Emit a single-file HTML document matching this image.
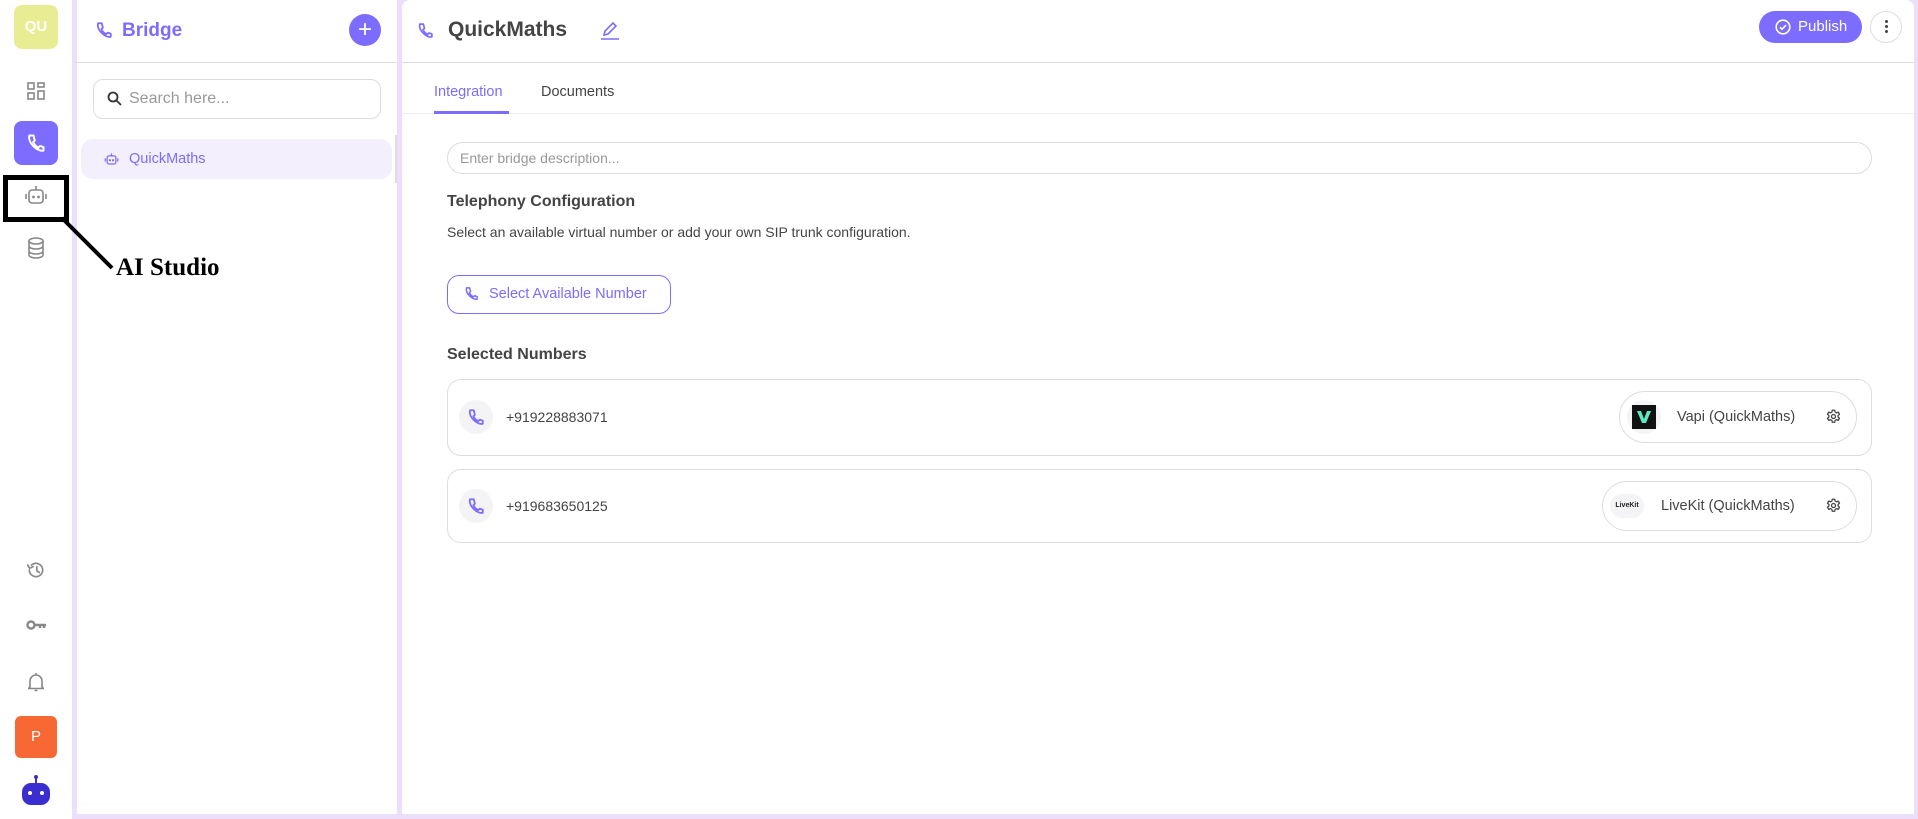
<!DOCTYPE html>
<html><head><meta charset="utf-8"><style>
*{box-sizing:border-box;margin:0;padding:0}
body{width:1918px;height:819px;background:#ecdffb;font-family:"Liberation Sans",sans-serif;position:relative;overflow:hidden;color:#444}
.abs{position:absolute}
.rail{left:0;top:0;width:72px;height:819px;background:#fff}
.p2{left:77px;top:0;width:320px;height:814px;background:#fff}
.main{left:402px;top:0;width:1512px;height:814px;background:#fff;border-radius:8px 8px 0 0}
svg{display:block}
</style></head><body>
<div class="abs rail"></div>
<div class="abs p2"></div>
<div class="abs main"></div>

<!-- rail -->
<div class="abs" style="left:14px;top:5px;width:44px;height:44px;border-radius:8px;background:#e8ec93;color:#fff;font-weight:bold;font-size:15px;text-align:center;line-height:44px">QU</div>
<svg class="abs" style="left:27px;top:82px" width="18" height="18" viewBox="0 0 18 18" fill="none" stroke="#888" stroke-width="1.6"><rect x="1" y="1" width="6" height="6"/><rect x="11" y="1" width="6" height="4"/><rect x="1" y="11" width="6" height="6"/><rect x="11" y="9" width="6" height="8"/></svg>
<div class="abs" style="left:14px;top:121px;width:44px;height:44px;border-radius:8px;background:#7c6cff"></div>
<svg class="abs" style="left:26px;top:133px" width="20" height="20" viewBox="0 0 24 24" fill="none" stroke="#fff" stroke-width="2.4" stroke-linecap="round" stroke-linejoin="round"><path d="M4 3c-1 4 1 9 5 13s9 6 12 5l0-4-4-1.5-2 2c-3-1.5-5-3.5-6.5-6.5l2-2L9 3z"/></svg>
<div class="abs" style="left:3px;top:175px;width:66px;height:47px;border:5px solid #000"></div>
<svg class="abs" style="left:24px;top:184px" width="24" height="22" viewBox="0 0 24 22" fill="none" stroke="#888" stroke-width="1.6"><rect x="5" y="6" width="14" height="13" rx="3"/><path d="M12 6V2M2 10v5M22 10v5"/><circle cx="9.5" cy="13" r=".6" fill="#888"/><circle cx="14.5" cy="13" r=".6" fill="#888"/></svg>
<svg class="abs" style="left:58px;top:214px" width="60" height="60"><path d="M4 4 L54 54" stroke="#000" stroke-width="4"/></svg>
<div class="abs" style="left:116px;top:254px;font-family:'Liberation Serif',serif;font-weight:bold;font-size:25px;color:#000">AI Studio</div>
<svg class="abs" style="left:27px;top:237px" width="18" height="22" viewBox="0 0 18 22" fill="none" stroke="#888" stroke-width="1.6"><ellipse cx="9" cy="4" rx="7" ry="3"/><path d="M2 4v14c0 1.7 3 3 7 3s7-1.3 7-3V4M2 9c0 1.7 3 3 7 3s7-1.3 7-3M2 14c0 1.7 3 3 7 3s7-1.3 7-3"/></svg>
<svg class="abs" style="left:26px;top:560px" width="20" height="20" viewBox="0 0 24 24" fill="none" stroke="#888" stroke-width="2" stroke-linecap="round"><path d="M4 12a8 8 0 1 0 2.5-5.8M2 6l2.5 4 4-2"/><path d="M13 8v5l3 2"/></svg>
<svg class="abs" style="left:26px;top:619px" width="21" height="12" viewBox="0 0 21 12" fill="none" stroke="#888" stroke-width="2.4"><circle cx="5" cy="6" r="3.5"/><path d="M9 6h11M14 6v3M18 6v3"/></svg>
<svg class="abs" style="left:28px;top:672px" width="16" height="20" viewBox="0 0 16 20" fill="none" stroke="#888" stroke-width="1.6"><path d="M2 15V9a6 6 0 0 1 12 0v6l1.5 1.5h-15z"/><path d="M8 1v2M6.5 18.5h3"/></svg>
<div class="abs" style="left:15px;top:716px;width:42px;height:42px;border-radius:6px;background:#f76835;color:#fff;font-size:15px;text-align:center;line-height:42px">P</div>
<svg class="abs" style="left:20px;top:774px" width="32" height="32" viewBox="0 0 32 32"><circle cx="16" cy="3" r="2" fill="#3b2ed0"/><rect x="15" y="3" width="2" height="7" fill="#3b2ed0"/><rect x="2" y="9" width="28" height="22" rx="9" fill="#3b2ed0"/><circle cx="10" cy="19" r="2" fill="#fff"/><circle cx="22" cy="19" r="2" fill="#fff"/></svg>

<!-- panel 2 -->
<svg class="abs" style="left:95px;top:21px" width="18" height="18" viewBox="0 0 24 24" fill="none" stroke="#7c6cff" stroke-width="2.4" stroke-linecap="round" stroke-linejoin="round"><path d="M4 3c-1 4 1 9 5 13s9 6 12 5l0-4-4-1.5-2 2c-3-1.5-5-3.5-6.5-6.5l2-2L9 3z"/></svg>
<div class="abs" style="left:122px;top:20px;font-size:19px;font-weight:bold;color:#7c6cff">Bridge</div>
<div class="abs" style="left:349px;top:14px;width:32px;height:32px;border-radius:50%;background:#7c6cff;color:#fff;text-align:center;line-height:31px;font-size:24px">+</div>
<div class="abs" style="left:77px;top:62px;width:320px;height:1px;background:#ddd"></div>
<div class="abs" style="left:93px;top:79px;width:288px;height:40px;border:1px solid #ddd;border-radius:10px"></div>
<svg class="abs" style="left:107px;top:91px" width="15" height="15" viewBox="0 0 15 15" fill="none" stroke="#333" stroke-width="1.8"><circle cx="6" cy="6" r="4.5"/><path d="M9.5 9.5L14 14"/></svg>
<div class="abs" style="left:129px;top:90px;font-size:16px;color:#999">Search here...</div>
<div class="abs" style="left:81px;top:139px;width:311px;height:40px;border-radius:12px;background:#f3effd"></div>
<svg class="abs" style="left:104px;top:152px" width="15" height="14" viewBox="0 0 24 22" fill="none" stroke="#7c6cff" stroke-width="2"><rect x="5" y="6" width="14" height="13" rx="3"/><path d="M12 6V2M2 10v5M22 10v5"/><circle cx="9.5" cy="13" r=".8" fill="#7c6cff"/><circle cx="14.5" cy="13" r=".8" fill="#7c6cff"/></svg>
<div class="abs" style="left:129px;top:151px;font-size:14.5px;color:#7c6cff">QuickMaths</div>
<div class="abs" style="left:395px;top:135px;width:2px;height:48px;background:#ddd"></div>

<!-- main header -->
<svg class="abs" style="left:417px;top:22px" width="17" height="17" viewBox="0 0 24 24" fill="none" stroke="#7c6cff" stroke-width="2.4" stroke-linecap="round" stroke-linejoin="round"><path d="M4 3c-1 4 1 9 5 13s9 6 12 5l0-4-4-1.5-2 2c-3-1.5-5-3.5-6.5-6.5l2-2L9 3z"/></svg>
<div class="abs" style="left:448px;top:18px;font-size:21px;font-weight:bold;color:#444">QuickMaths</div>
<svg class="abs" style="left:600px;top:20px" width="20" height="20" viewBox="0 0 20 20" fill="none" stroke="#7c6cff" stroke-width="1.6"><path d="M4 15l1-4 8-8 3 3-8 8z"/><path d="M1 19h18"/></svg>
<div class="abs" style="left:1759px;top:11px;width:103px;height:32px;border-radius:16px;background:#7c6cff;color:#fff;font-size:15px;line-height:32px;padding-left:39px">Publish</div>
<svg class="abs" style="left:1775px;top:19px" width="16" height="16" viewBox="0 0 16 16" fill="none" stroke="#fff" stroke-width="1.6"><circle cx="8" cy="8" r="6.8"/><path d="M5 8.2l2 2 4-4"/></svg>
<div class="abs" style="left:1870px;top:11px;width:32px;height:32px;border-radius:50%;border:1px solid #ddd"></div>
<div class="abs" style="left:1885px;top:20px;width:3px;height:3px;background:#444;border-radius:50%;box-shadow:0 5px 0 #444,0 10px 0 #444"></div>
<div class="abs" style="left:402px;top:62px;width:1512px;height:1px;background:#ddd"></div>
<div class="abs" style="left:434px;top:84px;font-size:14.5px;color:#7c6cff">Integration</div>
<div class="abs" style="left:541px;top:84px;font-size:14.5px;color:#444">Documents</div>
<div class="abs" style="left:402px;top:113px;width:1512px;height:1px;background:#eee"></div>
<div class="abs" style="left:434px;top:111px;width:75px;height:3px;background:#7c6cff"></div>

<div class="abs" style="left:447px;top:142px;width:1425px;height:32px;border:1px solid #ddd;border-radius:16px;font-size:14px;color:#999;padding-left:12px;line-height:30px">Enter bridge description...</div>
<div class="abs" style="left:447px;top:193px;font-size:16px;font-weight:bold;color:#444">Telephony Configuration</div>
<div class="abs" style="left:447px;top:224px;font-size:14px;color:#444">Select an available virtual number or add your own SIP trunk configuration.</div>
<div class="abs" style="left:447px;top:275px;width:224px;height:39px;border:1px solid #7c6cff;border-radius:12px;color:#7c6cff;font-size:14.5px;line-height:37px;padding-left:41px">Select Available Number</div>
<svg class="abs" style="left:464px;top:286px" width="15" height="15" viewBox="0 0 24 24" fill="none" stroke="#7c6cff" stroke-width="2.4" stroke-linecap="round" stroke-linejoin="round"><path d="M4 3c-1 4 1 9 5 13s9 6 12 5l0-4-4-1.5-2 2c-3-1.5-5-3.5-6.5-6.5l2-2L9 3z"/></svg>
<div class="abs" style="left:447px;top:346px;font-size:16px;font-weight:bold;color:#444">Selected Numbers</div>

<!-- card 1 -->
<div class="abs" style="left:447px;top:379px;width:1425px;height:77px;border:1px solid #ddd;border-radius:14px"></div>
<div class="abs" style="left:459px;top:400px;width:34px;height:34px;border-radius:50%;background:#f4f3f6"></div>
<svg class="abs" style="left:467px;top:408px" width="18" height="18" viewBox="0 0 24 24" fill="none" stroke="#7c6cff" stroke-width="2.4" stroke-linecap="round" stroke-linejoin="round"><path d="M4 3c-1 4 1 9 5 13s9 6 12 5l0-4-4-1.5-2 2c-3-1.5-5-3.5-6.5-6.5l2-2L9 3z"/></svg>
<div class="abs" style="left:506px;top:409px;font-size:14px;color:#444">+919228883071</div>
<div class="abs" style="left:1619px;top:391px;width:238px;height:52px;border:1px solid #ddd;border-radius:26px"></div>
<div class="abs" style="left:1627px;top:400px;width:34px;height:34px;border-radius:50%;background:#f4f3f6"></div>
<div class="abs" style="left:1632px;top:405px;width:24px;height:24px;background:#111"></div>
<svg class="abs" style="left:1635px;top:408px" width="18" height="18" viewBox="0 0 18 18"><path d="M2 3h4l3 8 3-8h4l-5 12H7z" fill="#5fe9c3"/></svg>
<div class="abs" style="left:1677px;top:409px;font-size:14.5px;color:#444">Vapi (QuickMaths)</div>
<svg class="abs" style="left:1826px;top:409px" width="15" height="15" viewBox="0 0 24 24" fill="none" stroke="#444" stroke-width="2" stroke-linejoin="round"><circle cx="12" cy="12" r="3.2"/><path d="M10 2h4l.6 3 2.2 1.2 2.8-1.2 2 3.4-2.3 2v2.4l2.3 2-2 3.4-2.8-1.2-2.2 1.2-.6 3h-4l-.6-3-2.2-1.2-2.8 1.2-2-3.4 2.3-2v-2.4L2.4 8.4l2-3.4 2.8 1.2L9.4 5z"/></svg>

<!-- card 2 -->
<div class="abs" style="left:447px;top:469px;width:1425px;height:74px;border:1px solid #ddd;border-radius:14px"></div>
<div class="abs" style="left:459px;top:489px;width:34px;height:34px;border-radius:50%;background:#f4f3f6"></div>
<svg class="abs" style="left:467px;top:497px" width="18" height="18" viewBox="0 0 24 24" fill="none" stroke="#7c6cff" stroke-width="2.4" stroke-linecap="round" stroke-linejoin="round"><path d="M4 3c-1 4 1 9 5 13s9 6 12 5l0-4-4-1.5-2 2c-3-1.5-5-3.5-6.5-6.5l2-2L9 3z"/></svg>
<div class="abs" style="left:506px;top:498px;font-size:14px;color:#444">+919683650125</div>
<div class="abs" style="left:1602px;top:481px;width:255px;height:50px;border:1px solid #ddd;border-radius:25px"></div>
<div class="abs" style="left:1610px;top:494px;width:34px;height:24px;border-radius:12px;background:#f4f3f6;font-size:7px;color:#222;text-align:center;line-height:24px;font-weight:bold">LiveKit</div>
<div class="abs" style="left:1661px;top:498px;font-size:14.5px;color:#444">LiveKit (QuickMaths)</div>
<svg class="abs" style="left:1826px;top:498px" width="15" height="15" viewBox="0 0 24 24" fill="none" stroke="#444" stroke-width="2" stroke-linejoin="round"><circle cx="12" cy="12" r="3.2"/><path d="M10 2h4l.6 3 2.2 1.2 2.8-1.2 2 3.4-2.3 2v2.4l2.3 2-2 3.4-2.8-1.2-2.2 1.2-.6 3h-4l-.6-3-2.2-1.2-2.8 1.2-2-3.4 2.3-2v-2.4L2.4 8.4l2-3.4 2.8 1.2L9.4 5z"/></svg>
</body></html>
